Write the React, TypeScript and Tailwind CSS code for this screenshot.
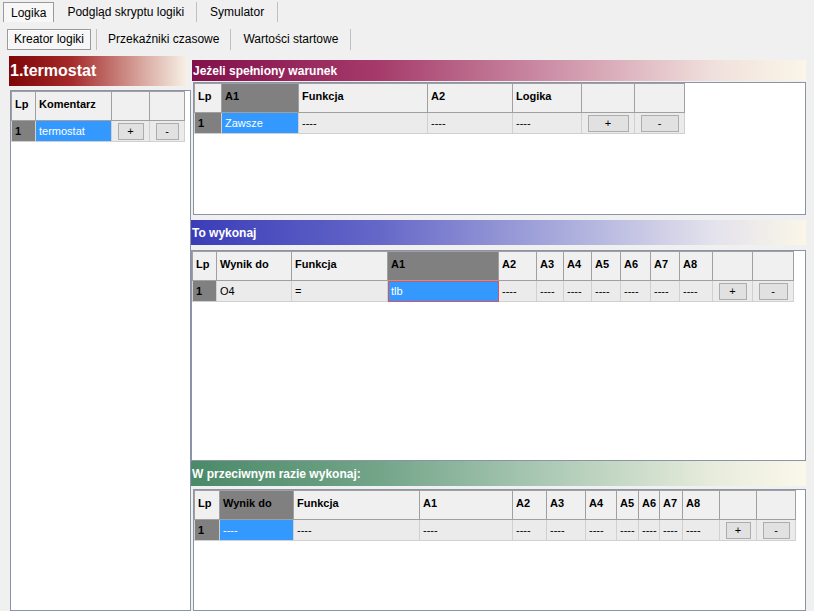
import React from 'react';

type Col = { label: string; w: number; dark?: boolean };
type Cell = { text: string; kind?: 'lp' | 'sel' | 'selRed' | 'btn' };

const font = { fontFamily: '"Liberation Sans", Arial, sans-serif' };

const SmallButton: React.FC<{ label: string; w: number }> = ({ label, w }) => (
  <div
    className="mx-auto mt-[2px] flex h-[17px] items-center justify-center border border-[#adadad] bg-[#e1e1e1] text-[11px] leading-none text-black"
    style={{ width: w }}
  >
    {label}
  </div>
);

const Grid: React.FC<{ cols: Col[]; row: Cell[]; headH?: number }> = ({ cols, row, headH = 29 }) => {
  const total = cols.reduce((s, c) => s + c.w, 0);
  return (
    <table className="table-fixed border-collapse text-[11px]" style={{ ...font, width: total }}>
      <colgroup>
        {cols.map((c, i) => (
          <col key={i} style={{ width: c.w }} />
        ))}
      </colgroup>
      <thead>
        <tr style={{ height: headH }}>
          {cols.map((c, i) => (
            <th
              key={i}
              className={`overflow-hidden border border-[#a0a0a0] px-[3px] pt-[4px] text-left align-top font-bold whitespace-nowrap text-black ${c.dark ? 'bg-[#808080]' : 'bg-[#f0f0f0]'}`}
            >
              {c.label}
            </th>
          ))}
        </tr>
      </thead>
      <tbody>
        <tr className="h-[21px]">
          {row.map((c, i) => {
            if (c.kind === 'btn')
              return (
                <td key={i} className="border border-[#d0d0d0] bg-[#ebebeb] p-0 align-top">
                  <SmallButton label={c.text} w={cols[i].w - 12} />
                </td>
              );
            const cls =
              c.kind === 'lp'
                ? 'bg-[#808080] font-bold text-black'
                : c.kind === 'sel'
                ? 'bg-[#3399ff] text-white'
                : c.kind === 'selRed'
                ? 'bg-[#3399ff] text-white outline outline-1 -outline-offset-1 outline-[#e05060]'
                : 'bg-[#ebebeb] text-black';
            return (
              <td key={i} className={`overflow-hidden border border-[#d0d0d0] px-[3px] align-middle whitespace-nowrap ${cls}`}>
                {c.text}
              </td>
            );
          })}
        </tr>
      </tbody>
    </table>
  );
};

const dash = (n: number): Cell[] => Array.from({ length: n }, () => ({ text: '----' }));

const SectionHeader: React.FC<{ title: string; grad: string; h: number }> = ({ title, grad, h }) => (
  <div
    className={`flex items-center pl-[1px] text-[12px] font-bold text-white ${grad}`}
    style={{ ...font, height: h }}
  >
    {title}
  </div>
);

export default function App() {
  return (
    <div className="flex h-[611px] w-[814px] flex-col overflow-hidden bg-[#f0f0f0] text-black" style={font}>
      {/* main tabs */}
      <div className="flex h-[22px] items-end pl-[3px] text-[12px]">
        <div className="flex h-[20px] items-center border border-[#9a9a9a] border-b-0 bg-[#f7f7f7] px-[7px]">Logika</div>
        <div className="ml-[1px] flex h-[20px] items-center border-r border-[#c0c0c0] px-[12px]">Podgląd skryptu logiki</div>
        <div className="flex h-[20px] items-center border-r border-[#c0c0c0] px-[13px]">Symulator</div>
      </div>
      {/* sub tabs */}
      <div className="mt-[6px] flex h-[22px] items-center pl-[7px] text-[12px]">
        <div className="flex h-[21px] items-center border border-[#9a9a9a] bg-[#f7f7f7] px-[6px] shadow-[inset_1px_1px_0_#ffffff]">
          Kreator logiki
        </div>
        <div className="ml-[5px] flex h-[21px] items-center border-l border-r border-[#c0c0c0] px-[11px]">Przekaźniki czasowe</div>
        <div className="flex h-[21px] items-center border-r border-[#c0c0c0] px-[12px]">Wartości startowe</div>
      </div>

      <div className="mt-[6px] flex min-h-0 flex-1">
        {/* left column */}
        <div className="flex w-[191px] flex-col pl-[9px]">
          <div
            className="flex h-[30px] w-[178px] items-center pl-[1px] text-[16px] font-bold text-white"
            style={{ backgroundImage: 'linear-gradient(90deg,#7e0606 0%,#a52a2a 35%,#d8a8a0 75%,#f7f1e6 100%)' }}
          >
            1.termostat
          </div>
          <div className="mt-[4px] ml-[1px] flex-1 border border-[#8a94a6] bg-white pl-0">
            <Grid
              cols={[{ label: 'Lp', w: 24 }, { label: 'Komentarz', w: 76 }, { label: '', w: 38 }, { label: '', w: 35 }]}
              row={[{ text: '1', kind: 'lp' }, { text: 'termostat', kind: 'sel' }, { text: '+', kind: 'btn' }, { text: '-', kind: 'btn' }]}
            />
          </div>
        </div>

        {/* right column */}
        <div className="flex w-[615px] flex-col">
          <div className="mt-[4px] pl-[1px]">
            <SectionHeader
              title="Jeżeli spełniony warunek"
              grad="bg-[linear-gradient(90deg,#82104c_0%,#a53a6a_30%,#cf94aa_60%,#f0e0dc_85%,#faf6e8_100%)]"
              h={21}
            />
          </div>
          <div className="mt-[1px] ml-[2px] h-[133px] border border-[#8a94a6] bg-white">
            <Grid
              cols={[
                { label: 'Lp', w: 27 },
                { label: 'A1', w: 77, dark: true },
                { label: 'Funkcja', w: 129 },
                { label: 'A2', w: 85 },
                { label: 'Logika', w: 69 },
                { label: '', w: 53 },
                { label: '', w: 50 },
              ]}
              row={[
                { text: '1', kind: 'lp' },
                { text: 'Zawsze', kind: 'sel' },
                ...dash(3),
                { text: '+', kind: 'btn' },
                { text: '-', kind: 'btn' },
              ]}
            />
          </div>

          <div className="mt-[5px]">
            <SectionHeader
              title="To wykonaj"
              grad="bg-[linear-gradient(90deg,#3b3db8_0%,#6466c8_30%,#a8aadc_60%,#e4e2ec_85%,#faf6e8_100%)]"
              h={25}
            />
          </div>
          <div className="mt-[5px] h-[211px] border border-[#8a94a6] bg-white">
            <Grid
              cols={[
                { label: 'Lp', w: 24 },
                { label: 'Wynik do', w: 75 },
                { label: 'Funkcja', w: 96 },
                { label: 'A1', w: 111, dark: true },
                { label: 'A2', w: 38 },
                { label: 'A3', w: 27 },
                { label: 'A4', w: 28 },
                { label: 'A5', w: 29 },
                { label: 'A6', w: 30 },
                { label: 'A7', w: 29 },
                { label: 'A8', w: 33 },
                { label: '', w: 40 },
                { label: '', w: 41 },
              ]}
              row={[
                { text: '1', kind: 'lp' },
                { text: 'O4' },
                { text: '=' },
                { text: 'tlb', kind: 'selRed' },
                ...dash(7),
                { text: '+', kind: 'btn' },
                { text: '-', kind: 'btn' },
              ]}
            />
          </div>

          <SectionHeader
            title="W przeciwnym razie wykonaj:"
            grad="bg-[linear-gradient(90deg,#4a8a68_0%,#72a488_30%,#b0ccb8_60%,#e8ecdc_85%,#faf8ea_100%)]"
            h={25}
          />
          <div className="mt-[3px] ml-[2px] flex-1 border border-[#8a94a6] bg-white">
            <Grid
              cols={[
                { label: 'Lp', w: 25 },
                { label: 'Wynik do', w: 74, dark: true },
                { label: 'Funkcja', w: 126 },
                { label: 'A1', w: 93 },
                { label: 'A2', w: 34 },
                { label: 'A3', w: 39 },
                { label: 'A4', w: 31 },
                { label: 'A5', w: 22 },
                { label: 'A6', w: 21 },
                { label: 'A7', w: 23 },
                { label: 'A8', w: 37 },
                { label: '', w: 37 },
                { label: '', w: 39 },
              ]}
              row={[
                { text: '1', kind: 'lp' },
                { text: '----', kind: 'sel' },
                ...dash(9),
                { text: '+', kind: 'btn' },
                { text: '-', kind: 'btn' },
              ]}
            />
          </div>
        </div>
      </div>
    </div>
  );
}
